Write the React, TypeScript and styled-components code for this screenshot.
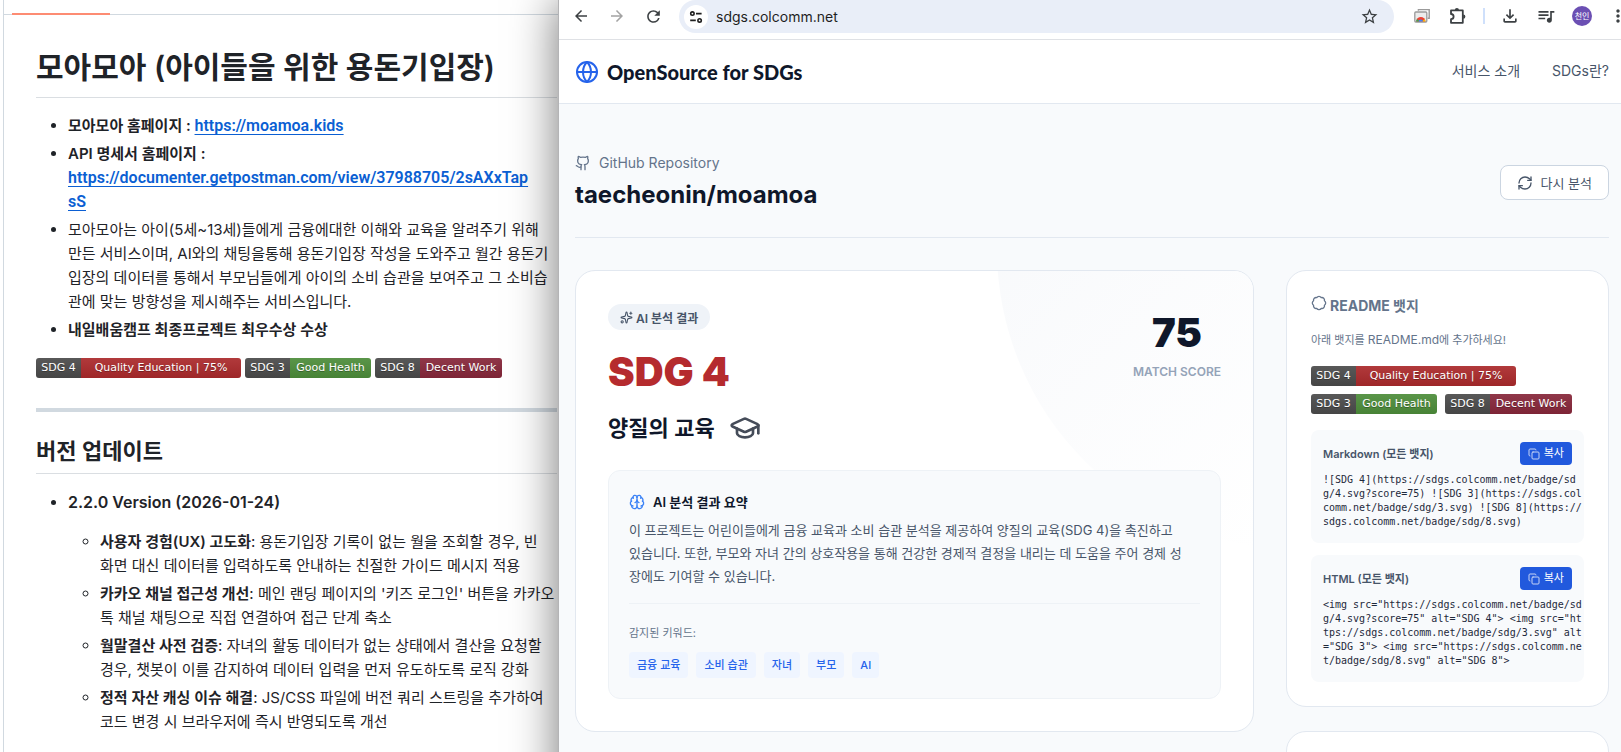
import React from 'react';
import styled, { createGlobalStyle } from 'styled-components';
import {
  Badge as BadgeIcon,
  Brain,
  Copy,
  Github,
  Globe,
  GraduationCap,
  RefreshCw,
  Sparkles,
} from 'lucide-react';
import {
  MdArrowBack,
  MdArrowForward,
  MdMoreVert,
  MdOutlineFileDownload,
  MdQueueMusic,
  MdRefresh,
  MdStarBorder,
} from 'react-icons/md';

const sans = `Inter, "Noto Sans CJK KR", sans-serif`;

const GlobalStyle = createGlobalStyle`
  *, *::before, *::after { box-sizing: border-box; }
  body { margin: 0; background: #fff; font-family: ${sans}; }
  button, input { font-family: inherit; }
  h1, h2, h3, p, ul { margin: 0; padding: 0; }
`;

const Desktop = styled.div`
  display: grid;
  grid-template-columns: minmax(0, 558fr) minmax(0, 1063fr);
  height: 100vh;
  overflow: hidden;
`;

/* ---------- README page (left) ---------- */

const ReadmePage = styled.main`
  margin-left: 3px;
  border-left: 1px solid #d1d9e0;
  color: #1f2328;
  white-space: nowrap;
  overflow: hidden;
`;

const TabStrip = styled.div`
  height: 15px;
  padding-left: 8px;
  border-bottom: 1px solid #d1d9e0;
`;

const ActiveTab = styled.div`
  width: 98px;
  height: 15px;
  border-bottom: 2px solid #fd8c73;
`;

const Markdown = styled.article`
  padding: 32px 1px 0 32px;
  font-size: 15px;
  line-height: 24px;
`;

const Title = styled.h1`
  padding-bottom: 10px;
  border-bottom: 1px solid #dadee2;
  font-size: 30px;
  font-weight: 600;
  line-height: 40px;
`;

const SectionTitle = styled.h2`
  padding-bottom: 7px;
  border-bottom: 1px solid #dadee2;
  font-size: 22px;
  font-weight: 600;
  line-height: 30px;
`;

const List = styled.ul<{ $nested?: boolean }>`
  margin-top: 16px;
  padding-left: 32px;
  list-style: ${(p) => (p.$nested ? 'circle' : 'disc')};

  li + li {
    margin-top: 4px;
  }
`;

const Strong = styled.strong`
  font-weight: 600;
`;

const VersionName = styled(Strong)`
  display: block;
  font-size: 16px;
`;

const DocLink = styled.a`
  color: #0b5fd3;
  font-family: Roboto, sans-serif;
  font-size: 16px;
  font-weight: 600;
  text-decoration: underline;
  text-underline-offset: 3px;
  vertical-align: top;
`;

const BadgeLine = styled.div`
  display: flex;
  gap: 4px;
  height: 26px;
  margin-top: 16px;
`;

const Rule = styled.hr`
  height: 4px;
  margin: 24px 0;
  border: 0;
  background: #d1d9e0;
`;

/* ---------- SDG badge ---------- */

const BadgeBox = styled.span`
  display: inline-flex;
  flex: none;
  height: 20px;
  border-radius: 3px;
  overflow: hidden;
  color: #fff;
  font: 11px/20px "DejaVu Sans", sans-serif;
  text-align: center;
  text-shadow: 0 1px 0 rgba(1, 1, 1, 0.3);
  white-space: nowrap;
`;

const BadgePart = styled.span<{ $color: string; $width: number }>`
  width: ${(p) => p.$width}px;
  background: linear-gradient(rgba(187, 187, 187, 0.1), rgba(0, 0, 0, 0.1)) ${(p) => p.$color};
`;

type BadgeProps = { goal: string; text: string; color: string; width: number };

const badges: Record<'education' | 'health' | 'work', BadgeProps> = {
  education: { goal: 'SDG 4', text: 'Quality Education | 75%', color: '#b02b2d', width: 160 },
  health: { goal: 'SDG 3', text: 'Good Health', color: '#4f913c', width: 81 },
  work: { goal: 'SDG 8', text: 'Decent Work', color: '#8b283c', width: 82 },
};

const SdgBadge = ({ goal, text, color, width }: BadgeProps) => (
  <BadgeBox>
    <BadgePart $color="#4d4d4d" $width={45}>{goal}</BadgePart>
    <BadgePart $color={color} $width={width}>{text}</BadgePart>
  </BadgeBox>
);

/* ---------- Browser window (right) ---------- */

const BrowserWindow = styled.section`
  position: relative;
  display: flex;
  flex-direction: column;
  border-left: 1px solid #b4b4b6;
  background: #f8fafc;
  box-shadow: -2px 0 42px rgba(0, 0, 0, 0.5);
  clip-path: inset(0 0 0 -60px);
`;

const Toolbar = styled.div`
  display: flex;
  flex: none;
  height: 40px;
  padding-left: 12px;
  border-bottom: 1px solid #dfe1e5;
  background: #fff;
`;

const NavButtons = styled.div`
  display: flex;
  align-items: center;
  gap: 16px;
  height: 32px;
`;

const ActionButtons = styled.div`
  display: flex;
  align-items: center;
  gap: 16px;
  height: 32px;
  margin: 0 -7px 0 18px;
`;

const ToolButton = styled.button<{ $dim?: boolean }>`
  display: flex;
  flex: none;
  align-items: center;
  justify-content: center;
  width: 20px;
  height: 20px;
  padding: 0;
  border: 0;
  background: none;
  color: ${(p) => (p.$dim ? '#a3a3a3' : '#3c4043')};
`;

const Omnibox = styled.div`
  display: flex;
  flex: 1;
  align-items: center;
  gap: 8px;
  height: 33px;
  margin-left: 16px;
  padding: 0 15px 0 5px;
  border-radius: 17px;
  background: #e9eef8;
`;

const SiteInfo = styled.button`
  display: flex;
  align-items: center;
  justify-content: center;
  width: 24px;
  height: 24px;
  padding: 0;
  border: 0;
  border-radius: 50%;
  background: #fff;
  color: #1f1f1f;
`;

const UrlInput = styled.input`
  flex: 1;
  min-width: 0;
  padding: 0;
  border: 0;
  outline: 0;
  background: none;
  color: #1f1f1f;
  font-size: 14px;
  line-height: 20px;
`;

const ToolDivider = styled.span`
  width: 2px;
  height: 16px;
  margin: 0 -1px;
  background: #cfe0fb;
`;

const Avatar = styled.button`
  flex: none;
  width: 20px;
  height: 20px;
  padding: 0;
  border: 0;
  border-radius: 50%;
  background: #6b4fb3;
  color: #fff;
  font-size: 8px;
  line-height: 20px;
  white-space: nowrap;
`;

const SiteHeader = styled.header`
  display: flex;
  flex: none;
  align-items: center;
  justify-content: space-between;
  height: 64px;
  padding: 0 12px 0 16px;
  border-bottom: 1px solid #e2e8f0;
  background: #fff;
`;

const Logo = styled.a`
  display: flex;
  align-items: center;
  gap: 8px;
  color: #0f172a;
  font-family: Lato, sans-serif;
  font-size: 20px;
  font-weight: 900;
  line-height: 24px;
  text-decoration: none;

  svg { color: #2563eb; }
`;

const Nav = styled.nav`
  display: flex;
  gap: 32px;
  padding-bottom: 2px;

  a {
    color: #475569;
    font-size: 14px;
    line-height: 20px;
    text-decoration: none;
  }
`;

const Content = styled.div`
  padding: 48px 12px 0 16px;
`;

const RepoHeader = styled.div`
  display: flex;
  align-items: center;
  justify-content: space-between;
  padding-bottom: 24px;
  border-bottom: 1px solid #e2e8f0;
`;

const RepoLabel = styled.div`
  display: flex;
  align-items: center;
  gap: 8px;
  color: #64748b;
  font-size: 14px;
  line-height: 22px;
`;

const RepoName = styled.h1`
  margin-top: 3px;
  color: #0f172a;
  font-size: 24px;
  font-weight: 700;
  line-height: 36px;
`;

const OutlineButton = styled.button`
  display: flex;
  align-items: center;
  gap: 8px;
  height: 35px;
  padding: 0 16px;
  border: 1px solid #cbd5e1;
  border-radius: 8px;
  background: #fff;
  color: #475569;
  font-size: 13px;
`;

const Columns = styled.div`
  display: grid;
  grid-template-columns: minmax(0, 679fr) minmax(0, 323fr);
  gap: 32px;
  align-items: start;
  margin-top: 32px;
`;

const Card = styled.section<{ $pad: number }>`
  position: relative;
  min-height: 160px;
  padding: ${(p) => p.$pad}px;
  border: 1px solid #e2e8f0;
  border-radius: 20px;
  background: #fff;
  overflow: hidden;
`;

const Glow = styled.div`
  position: absolute;
  top: -322px;
  right: -344px;
  width: 600px;
  height: 600px;
  border-radius: 50%;
  background: linear-gradient(135deg, #f5f7fa, #fff 72%);
`;

const ResultTop = styled.div`
  position: relative;
  display: flex;
  align-items: flex-start;
  justify-content: space-between;
`;

const Pill = styled.span`
  display: inline-flex;
  align-items: center;
  gap: 3px;
  height: 26px;
  margin-top: 1px;
  padding: 0 12px;
  border-radius: 13px;
  background: #eff3f8;
  color: #475569;
  font-size: 12px;
  font-weight: 600;
`;

const Goal = styled.h2`
  margin-top: 18px;
  color: #b52b2e;
  font-size: 40px;
  font-weight: 900;
  line-height: 48px;
`;

const GoalName = styled.h3`
  display: flex;
  align-items: center;
  gap: 14px;
  margin-top: 15px;
  color: #0f172a;
  font-size: 22px;
  font-weight: 600;
  line-height: 34px;

  svg { color: #454c59; }
`;

const Score = styled.div`
  display: flex;
  flex-direction: column;
  align-items: center;
  margin-top: 10px;
  color: #0f172a;
  font-size: 40px;
  font-weight: 900;
  line-height: 40px;
`;

const ScoreLabel = styled.span`
  margin-top: 9px;
  color: #94a3b8;
  font-size: 12px;
  font-weight: 600;
  line-height: 20px;
`;

const Summary = styled.div`
  position: relative;
  margin-top: 25px;
  padding: 20px;
  border: 1px solid #eef2f6;
  border-radius: 12px;
  background: #f8fafc;
`;

const SummaryTitle = styled.h4`
  display: flex;
  align-items: center;
  gap: 8px;
  margin: 0;
  color: #0f172a;
  font-size: 13px;
  font-weight: 600;
  line-height: 22px;

  svg { color: #3b82f6; }
`;

const SummaryText = styled.p`
  margin-top: 6px;
  padding-bottom: 15px;
  border-bottom: 1px solid #eef2f6;
  color: #475569;
  font-size: 13px;
  line-height: 23px;
  white-space: nowrap;
`;

const Caption = styled.p`
  margin-top: 20px;
  color: #64748b;
  font-size: 11px;
  line-height: 18px;
`;

const Tags = styled.div`
  display: flex;
  gap: 8px;
  margin-top: 10px;
`;

const Tag = styled.span`
  padding: 0 8px;
  border-radius: 4px;
  background: #eff5ff;
  color: #2563eb;
  font-size: 11px;
  font-weight: 500;
  line-height: 26px;
`;

const Sidebar = styled.aside`
  display: grid;
  gap: 24px;
`;

const SideTitle = styled.h3`
  display: flex;
  gap: 3px;
  color: #64748b;
  font-size: 14px;
  font-weight: 700;
  line-height: 22px;
`;

const SideText = styled.p`
  margin-top: 13px;
  color: #64748b;
  font-size: 11px;
  line-height: 20px;
`;

const FileName = styled.span`
  font-size: 12px;
`;

const SideBadges = styled.div`
  display: flex;
  flex-wrap: wrap;
  gap: 8px;
  margin-top: 16px;
`;

const Snippet = styled.div`
  margin-top: 12px;
  padding: 12px;
  border-radius: 8px;
  background: #f8fafc;

  ${SideBadges} + & { margin-top: 16px; }
`;

const SnippetHead = styled.div`
  display: flex;
  align-items: center;
  justify-content: space-between;
  color: #475569;
  font-size: 11px;
  font-weight: 600;
  line-height: 20px;
`;

const CopyButton = styled.button`
  display: flex;
  align-items: center;
  gap: 4px;
  height: 23px;
  padding: 0 8px;
  border: 0;
  border-radius: 4px;
  background: #2159dd;
  color: #fff;
  font-size: 11px;
  line-height: 23px;

  svg { opacity: 0.75; }
`;

const Code = styled.pre`
  margin: 8px 0 0;
  padding-bottom: 2px;
  color: #1e293b;
  font: 10px/14px "DejaVu Sans Mono", monospace;
`;

const markdownCode = `![SDG 4](https://sdgs.colcomm.net/badge/sd
g/4.svg?score=75) ![SDG 3](https://sdgs.col
comm.net/badge/sdg/3.svg) ![SDG 8](https://
sdgs.colcomm.net/badge/sdg/8.svg)`;

const htmlCode = `<img src="https://sdgs.colcomm.net/badge/sd
g/4.svg?score=75" alt="SDG 4"> <img src="ht
tps://sdgs.colcomm.net/badge/sdg/3.svg" alt
="SDG 3"> <img src="https://sdgs.colcomm.ne
t/badge/sdg/8.svg" alt="SDG 8">`;

const TuneIcon = () => (
  <svg width="14" height="14" viewBox="0 0 14 14" fill="none" stroke="currentColor" strokeWidth="1.6">
    <circle cx="3.4" cy="3.6" r="1.7" />
    <path d="M7 3.6h5.6M1.2 10.4h5.6" />
    <circle cx="10.6" cy="10.4" r="1.7" />
  </svg>
);

const PhotosIcon = () => (
  <svg width="18" height="18" viewBox="0 0 18 18" fill="none">
    <path d="M5.4 3.8V2.6h10.8v8.6h-1.6" stroke="#9a9a9a" strokeWidth="1.4" />
    <rect x="1.8" y="5" width="12" height="10" rx="1" fill="#ececec" stroke="#9a9a9a" strokeWidth="1.3" />
    <path d="M3.2 14.6a4.6 4.6 0 0 1 9.2 0z" fill="#ea4335" />
    <path d="M3.2 14.6a4.6 4.6 0 0 1 .8-2.6l2.6 2.6z" fill="#34a853" />
    <path d="M12.4 14.6a4.6 4.6 0 0 0-.8-2.6l-2.6 2.6z" fill="#fbbc04" />
    <path d="M5.6 14.6a2.2 2.2 0 0 1 4.4 0z" fill="#4285f4" />
  </svg>
);

const PuzzleIcon = () => (
  <svg width="18" height="18" viewBox="0 0 18 18">
    <path
      d="M2 3.4h11.8v12.4H2v-3.6a2.6 2.6 0 0 0 0-5.2z"
      fill="none"
      stroke="currentColor"
      strokeWidth="1.8"
      strokeLinejoin="round"
    />
    <path d="M5.8 3.2a2.1 2.1 0 0 1 4.2 0zM14.2 7.4a2.2 2.2 0 0 1 0 4.4z" fill="currentColor" />
  </svg>
);

const CodeSnippet = ({ title, code }: { title: string; code: string }) => (
  <Snippet>
    <SnippetHead>
      {title}
      <CopyButton type="button"><Copy size={12} />복사</CopyButton>
    </SnippetHead>
    <Code>{code}</Code>
  </Snippet>
);

const updates: [string, string, string][] = [
  ['사용자 경험(UX) 고도화', '용돈기입장 기록이 없는 월을 조회할 경우, 빈', '화면 대신 데이터를 입력하도록 안내하는 친절한 가이드 메시지 적용'],
  ['카카오 채널 접근성 개선', "메인 랜딩 페이지의 '키즈 로그인' 버튼을 카카오", '톡 채널 채팅으로 직접 연결하여 접근 단계 축소'],
  ['월말결산 사전 검증', '자녀의 활동 데이터가 없는 상태에서 결산을 요청할', '경우, 챗봇이 이를 감지하여 데이터 입력을 먼저 유도하도록 로직 강화'],
  ['정적 자산 캐싱 이슈 해결', 'JS/CSS 파일에 버전 쿼리 스트링을 추가하여', '코드 변경 시 브라우저에 즉시 반영되도록 개선'],
];

const Readme = () => (
  <ReadmePage>
    <TabStrip><ActiveTab /></TabStrip>
    <Markdown>
      <Title>모아모아 (아이들을 위한 용돈기입장)</Title>
      <List>
        <li><Strong>모아모아 홈페이지 : <DocLink href="#moamoa">https://moamoa.kids</DocLink></Strong></li>
        <li>
          <Strong>API 명세서 홈페이지 :</Strong><br />
          <DocLink href="#api">
            https://documenter.getpostman.com/view/37988705/2sAXxTap<br />sS
          </DocLink>
        </li>
        <li>
          모아모아는 아이(5세~13세)들에게 금융에대한 이해와 교육을 알려주기 위해<br />
          만든 서비스이며, AI와의 채팅을통해 용돈기입장 작성을 도와주고 월간 용돈기<br />
          입장의 데이터를 통해서 부모님들에게 아이의 소비 습관을 보여주고 그 소비습<br />
          관에 맞는 방향성을 제시해주는 서비스입니다.
        </li>
        <li><Strong>내일배움캠프 최종프로젝트 최우수상 수상</Strong></li>
      </List>
      <BadgeLine>
        <SdgBadge {...badges.education} />
        <SdgBadge {...badges.health} />
        <SdgBadge {...badges.work} />
      </BadgeLine>
      <Rule />
      <SectionTitle>버전 업데이트</SectionTitle>
      <List>
        <li>
          <VersionName>2.2.0 Version (2026-01-24)</VersionName>
          <List $nested>
            {updates.map(([name, first, second]) => (
              <li key={name}><Strong>{name}</Strong>: {first}<br />{second}</li>
            ))}
          </List>
        </li>
      </List>
    </Markdown>
  </ReadmePage>
);

const BrowserToolbar = () => (
  <Toolbar>
    <NavButtons>
      <ToolButton aria-label="뒤로"><MdArrowBack size={18} /></ToolButton>
      <ToolButton $dim aria-label="앞으로"><MdArrowForward size={18} /></ToolButton>
      <ToolButton aria-label="새로고침"><MdRefresh size={19} /></ToolButton>
    </NavButtons>
    <Omnibox>
      <SiteInfo aria-label="사이트 정보"><TuneIcon /></SiteInfo>
      <UrlInput aria-label="주소" defaultValue="sdgs.colcomm.net" />
      <ToolButton aria-label="북마크"><MdStarBorder size={19} /></ToolButton>
    </Omnibox>
    <ActionButtons>
      <ToolButton aria-label="사진"><PhotosIcon /></ToolButton>
      <ToolButton aria-label="확장 프로그램"><PuzzleIcon /></ToolButton>
      <ToolDivider />
      <ToolButton aria-label="다운로드"><MdOutlineFileDownload size={24} /></ToolButton>
      <ToolButton aria-label="미디어"><MdQueueMusic size={20} /></ToolButton>
      <Avatar>천인</Avatar>
      <ToolButton aria-label="메뉴"><MdMoreVert size={20} /></ToolButton>
    </ActionButtons>
  </Toolbar>
);

const App = () => (
  <>
    <GlobalStyle />
    <Desktop>
      <Readme />
      <BrowserWindow>
        <BrowserToolbar />
        <SiteHeader>
          <Logo href="#home"><Globe size={24} />OpenSource for SDGs</Logo>
          <Nav>
            <a href="#about">서비스 소개</a>
            <a href="#sdgs">SDGs란?</a>
          </Nav>
        </SiteHeader>
        <Content>
          <RepoHeader>
            <div>
              <RepoLabel><Github size={16} />GitHub Repository</RepoLabel>
              <RepoName>taecheonin/moamoa</RepoName>
            </div>
            <OutlineButton type="button"><RefreshCw size={16} />다시 분석</OutlineButton>
          </RepoHeader>
          <Columns>
            <Card $pad={32}>
              <Glow />
              <ResultTop>
                <div>
                  <Pill><Sparkles size={13} />AI 분석 결과</Pill>
                  <Goal>SDG 4</Goal>
                  <GoalName>양질의 교육<GraduationCap size={32} /></GoalName>
                </div>
                <Score>75<ScoreLabel>MATCH SCORE</ScoreLabel></Score>
              </ResultTop>
              <Summary>
                <SummaryTitle><Brain size={16} />AI 분석 결과 요약</SummaryTitle>
                <SummaryText>
                  이 프로젝트는 어린이들에게 금융 교육과 소비 습관 분석을 제공하여 양질의 교육(SDG 4)을 촉진하고<br />
                  있습니다. 또한, 부모와 자녀 간의 상호작용을 통해 건강한 경제적 결정을 내리는 데 도움을 주어 경제 성<br />
                  장에도 기여할 수 있습니다.
                </SummaryText>
                <Caption>감지된 키워드:</Caption>
                <Tags>
                  {['금융 교육', '소비 습관', '자녀', '부모', 'AI'].map((t) => <Tag key={t}>{t}</Tag>)}
                </Tags>
              </Summary>
            </Card>
            <Sidebar>
              <Card $pad={24}>
                <SideTitle><BadgeIcon size={16} />README 뱃지</SideTitle>
                <SideText>아래 뱃지를 <FileName>README.md</FileName>에 추가하세요!</SideText>
                <SideBadges>
                  <SdgBadge {...badges.education} />
                  <SdgBadge {...badges.health} />
                  <SdgBadge {...badges.work} />
                </SideBadges>
                <CodeSnippet title="Markdown (모든 뱃지)" code={markdownCode} />
                <CodeSnippet title="HTML (모든 뱃지)" code={htmlCode} />
              </Card>
              <Card $pad={24} />
            </Sidebar>
          </Columns>
        </Content>
      </BrowserWindow>
    </Desktop>
  </>
);

export default App;
